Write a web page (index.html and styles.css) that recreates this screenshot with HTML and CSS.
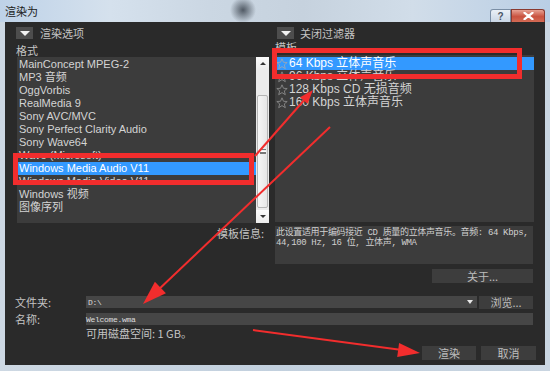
FILE: index.html
```html
<!DOCTYPE html>
<html lang="zh-CN">
<head>
<meta charset="utf-8">
<title>渲染为</title>
<link rel="stylesheet" href="styles.css">
</head>
<body>
<div class="window">
  <div class="titlebar">
    <span class="title">渲染为</span>
    <div class="caption">
      <div class="cap-btn help">?</div>
      <div class="cap-btn close"><svg width="11" height="8" viewBox="0 0 11 8"><path d="M1.5 0.8 L9.5 7.2 M9.5 0.8 L1.5 7.2" stroke="#fff" stroke-width="2.2" stroke-linecap="round"/></svg></div>
    </div>
  </div>
  <div class="client">
    <div class="panes">
      <div class="pane pane-left">
        <div class="pane-head"><span class="dd"></span><span class="pane-title">渲染选项</span></div>
        <div class="field-label fl-left">格式</div>
        <div class="listbox">
          <ul class="list list-left">
            <li>MainConcept MPEG-2</li>
            <li>MP3 音频</li>
            <li>OggVorbis</li>
            <li>RealMedia 9</li>
            <li>Sony AVC/MVC</li>
            <li>Sony Perfect Clarity Audio</li>
            <li>Sony Wave64</li>
            <li>Wave (Microsoft)</li>
            <li class="sel">Windows Media Audio V11</li>
            <li>Windows Media Video V11</li>
            <li>Windows 视频</li>
            <li>图像序列</li>
          </ul>
          <div class="vscroll">
            <div class="sb-btn up"><span class="tri-up"></span></div>
            <div class="sb-track"></div>
            <div class="sb-thumb"><span class="grip"></span></div>
            <div class="sb-track2"></div>
            <div class="sb-btn down"><span class="tri-down"></span></div>
          </div>
        </div>
      </div>
      <div class="pane pane-right">
        <div class="pane-head head-right"><span class="dd"></span><span class="pane-title">关闭过滤器</span></div>
        <div class="field-label fl-right">模板</div>
        <ul class="list list-right">
          <li class="sel"><svg class="star" viewBox="0 0 12 12"><path d="M6 0.8 L7.5 4.3 L11.2 4.5 L8.3 6.9 L9.3 10.7 L6 8.6 L2.7 10.7 L3.7 6.9 L0.8 4.5 L4.5 4.3 Z" fill="none" stroke="#9aa7b6" stroke-width="0.9"/></svg><span>64 Kbps 立体声音乐</span></li>
          <li><svg class="star" viewBox="0 0 12 12"><path d="M6 0.8 L7.5 4.3 L11.2 4.5 L8.3 6.9 L9.3 10.7 L6 8.6 L2.7 10.7 L3.7 6.9 L0.8 4.5 L4.5 4.3 Z" fill="none" stroke="#8a8a8a" stroke-width="0.9"/></svg><span>96 Kbps 立体声音乐</span></li>
          <li><svg class="star" viewBox="0 0 12 12"><path d="M6 0.8 L7.5 4.3 L11.2 4.5 L8.3 6.9 L9.3 10.7 L6 8.6 L2.7 10.7 L3.7 6.9 L0.8 4.5 L4.5 4.3 Z" fill="none" stroke="#8a8a8a" stroke-width="0.9"/></svg><span>128 Kbps CD 无损音频</span></li>
          <li><svg class="star" viewBox="0 0 12 12"><path d="M6 0.8 L7.5 4.3 L11.2 4.5 L8.3 6.9 L9.3 10.7 L6 8.6 L2.7 10.7 L3.7 6.9 L0.8 4.5 L4.5 4.3 Z" fill="none" stroke="#8a8a8a" stroke-width="0.9"/></svg><span>160 Kbps 立体声音乐</span></li>
        </ul>
      </div>
    </div>
    <div class="info-row">
      <span class="info-label">模板信息:</span>
      <div class="info-box">此设置适用于编码接近 CD 质量的立体声音乐。音频: 64 Kbps,<br>44,100 Hz, 16 位, 立体声, WMA</div>
    </div>
    <div class="about-row"><button class="btn btn-about">关于...</button></div>
    <div class="form-row row-folder">
      <span class="form-label">文件夹:</span>
      <div class="input input-folder"><span class="mono">D:\</span><span class="tri-down white"></span></div>
      <button class="btn btn-browse">浏览...</button>
    </div>
    <div class="form-row row-name">
      <span class="form-label">名称:</span>
      <div class="input input-name"><span class="mono">Welcome.wma</span></div>
    </div>
    <div class="disk">可用磁盘空间: 1 GB。</div>
    <div class="actions">
      <button class="btn btn-render">渲染</button>
      <button class="btn btn-cancel">取消</button>
    </div>
  </div>
  <svg class="annot" width="550" height="371" viewBox="0 0 550 371">
    <g fill="none" stroke="#f22d2d" stroke-width="5">
      <rect x="15.5" y="155.5" width="236" height="27"/>
      <rect x="274.5" y="50.5" width="245" height="26"/>
    </g>
    <g stroke="#f22d2d" stroke-width="2" fill="none">
      <line x1="255" y1="156" x2="306" y2="98"/>
      <line x1="330" y1="127" x2="156" y2="292"/>
      <line x1="253" y1="330" x2="402" y2="350"/>
    </g>
    <g fill="#f22d2d">
      <polygon points="313,90 307.5,103.8 300,97.2"/>
      <polygon points="143,304 165.9,293.3 154.9,281.7"/>
      <polygon points="420,353 397.2,356.9 399.1,343.1"/>
    </g>
  </svg>
</div>
</body>
</html>
```
FILE: styles.css
```css
* { box-sizing: border-box; }
html, body { margin: 0; padding: 0; }
body {
  width: 550px;
  height: 371px;
  overflow: hidden;
  font-family: "Liberation Sans", "Noto Sans CJK SC", sans-serif;
  font-size: 11px;
  background: #c6d4e2;
}
.window {
  position: relative;
  width: 550px;
  height: 371px;
  display: flex;
  flex-direction: column;
  background: linear-gradient(to right, #cdd8e3, #c2d0de 50%, #c9d5e1);
}
.titlebar {
  height: 22px;
  display: flex;
  justify-content: space-between;
  background:
    radial-gradient(circle at 243px 10px, rgba(40,48,58,0.75) 0, rgba(40,48,58,0) 13px),
    linear-gradient(to right, #bed2e8 0, #d5e1ed 20%, #cbd7e3 38%, #c6d2de 55%, #d1dde9 75%, #b9cee5 100%);
}
.title {
  margin-left: 5px;
  line-height: 22px;
  color: #1b1b1b;
  font-size: 11px;
  font-family: "Noto Sans CJK SC", sans-serif;
}
.caption {
  display: flex;
  align-self: flex-end;
  margin-right: 5px;
  height: 13px;
}
.cap-btn {
  height: 13px;
  display: flex;
  align-items: center;
  justify-content: center;
}
.help {
  width: 21px;
  border: 1px solid #7a8ea5;
  border-bottom: none;
  border-top-left-radius: 3px;
  background: linear-gradient(#eaf0f6, #c9d6e4);
  color: #4a5666;
  font-size: 10px;
  font-weight: bold;
}
.close {
  width: 34px;
  border: 1px solid #8a3a30;
  border-bottom: none;
  border-top-right-radius: 3px;
  background: linear-gradient(#e7a294, #c9523f 55%, #d46b55);
}
.client {
  margin: 0 5px 6px 5px;
  height: 343px;
  background: #2a2a2a;
  display: flex;
  flex-direction: column;
  color: #c8c8c8;
}
.panes {
  display: flex;
  height: 201px;
}
.pane-left {
  width: 265px;
  padding-left: 11px;
}
.pane-right {
  width: 264px;
  padding-left: 5px;
}
.pane-head {
  display: flex;
  align-items: center;
  height: 12px;
  margin-top: 5px;
}
.head-right { margin-left: 2px; }
.dd {
  width: 17px;
  height: 12px;
  background: #4d4d4d;
  display: flex;
  align-items: center;
  justify-content: center;
}
.dd::after {
  content: "";
  border-left: 5px solid transparent;
  border-right: 5px solid transparent;
  border-top: 5px solid #f2f2f2;
}
.pane-title {
  margin-left: 7px;
  font-family: "Noto Sans CJK SC", sans-serif;
  font-size: 11px;
  line-height: 12px;
  color: #c4c4c4;
}
.head-right .pane-title { margin-left: 6px; }
.field-label {
  font-family: "Noto Sans CJK SC", sans-serif;
  font-size: 11px;
  color: #c4c4c4;
}
.fl-left {
  height: 18px;
  padding-top: 5px;
  line-height: 13px;
}
.fl-right {
  height: 16px;
  line-height: 16px;
}
.listbox {
  display: flex;
  margin-left: 1px;
  height: 166px;
}
.list {
  list-style: none;
  margin: 0;
  padding: 0;
  background: #3c3c3c;
}
.list li {
  height: 13px;
  line-height: 13px;
  white-space: nowrap;
  color: #d4d4d4;
}
.list li.sel {
  background: #3399ff;
  color: #ffffff;
}
.list-left {
  width: 239px;
  padding-top: 1px;
}
.list-left li { padding-left: 2px; }
.list-right {
  width: 259px;
  height: 167px;
  padding-top: 2px;
}
.list-right li {
  display: flex;
  align-items: center;
  font-size: 12px;
  padding-left: 1px;
}
.star {
  width: 12px;
  height: 12px;
  margin-right: 1px;
  flex: none;
}
.vscroll {
  width: 13px;
  display: flex;
  flex-direction: column;
  background: #e9e9e9;
}
.sb-btn {
  height: 13px;
  background: linear-gradient(#fbfbfb, #ececec);
  display: flex;
  align-items: center;
  justify-content: center;
}
.tri-up {
  border-left: 3px solid transparent;
  border-right: 3px solid transparent;
  border-bottom: 3px solid #333;
}
.tri-down {
  border-left: 3px solid transparent;
  border-right: 3px solid transparent;
  border-top: 3px solid #333;
}
.sb-track { height: 25px; background: #ebebeb; }
.sb-thumb {
  height: 113px;
  margin: 0 1px;
  border: 1px solid #b5b5b5;
  border-radius: 2px;
  background: linear-gradient(to right, #f6f6f6, #e6e6e6);
  display: flex;
  align-items: center;
  justify-content: center;
}
.grip {
  width: 6px;
  height: 5px;
  border-top: 1px solid #777;
  border-bottom: 1px solid #777;
  background: linear-gradient(#fff 0, #fff 1px, #777 1px, #777 2px, transparent 2px);
  background-size: 6px 2px;
  background-position: 0 1px;
  background-repeat: no-repeat;
}
.sb-track2 { flex: 1; background: #ebebeb; }
.info-row {
  display: flex;
  margin-top: 3px;
  height: 38px;
}
.info-label {
  width: 259px;
  text-align: right;
  font-family: "Noto Sans CJK SC", sans-serif;
  line-height: 12px;
  padding-top: 1px;
  color: #c4c4c4;
}
.info-box {
  margin-left: 11px;
  width: 258px;
  background: #3c3c3c;
  font-family: "Liberation Mono", "Noto Sans CJK SC", monospace;
  font-size: 9px;
  line-height: 10px;
  padding: 2px 0 0 1px;
  color: #d0d0d0;
  white-space: nowrap;
  letter-spacing: -0.35px;
}
.about-row {
  display: flex;
  justify-content: flex-end;
  padding-right: 12px;
  margin-top: 5px;
  height: 14px;
}
.btn {
  border: none;
  margin: 0;
  padding: 0;
  background: #3d3d3d;
  color: #bdbdbd;
  font-family: "Noto Sans CJK SC", sans-serif;
  font-size: 11px;
  height: 14px;
  line-height: 14px;
}
.btn-about { width: 101px; }
.form-row {
  display: flex;
  align-items: center;
  height: 12px;
  padding-right: 12px;
}
.row-folder { margin-top: 13px; }
.row-name { margin-top: 5px; }
.form-label {
  width: 81px;
  padding-left: 10px;
  font-family: "Noto Sans CJK SC", sans-serif;
  color: #c4c4c4;
  line-height: 12px;
}
.input {
  height: 12px;
  background: #464646;
  display: flex;
  align-items: center;
  padding-left: 2px;
}
.input-folder {
  width: 391px;
  justify-content: space-between;
  padding-right: 4px;
}
.input-name { flex: 1; padding-left: 0; }
.mono {
  font-family: "Liberation Mono", monospace;
  font-size: 8px;
  color: #dcdcdc;
  letter-spacing: -0.3px;
}
.tri-down.white { border-top-color: #e8e8e8; border-top-width: 4px; }
.btn-browse {
  margin-left: 2px;
  width: 54px;
  height: 13px;
  line-height: 13px;
}
.disk {
  margin-top: 3px;
  padding-left: 81px;
  height: 10px;
  line-height: 10px;
  font-family: "Noto Sans CJK SC", sans-serif;
  color: #c4c4c4;
}
.actions {
  display: flex;
  justify-content: flex-end;
  margin-top: 8px;
  padding-right: 9px;
  gap: 5px;
}
.btn-render { width: 54px; }
.btn-cancel { width: 55px; }
.annot {
  position: absolute;
  left: 0;
  top: 0;
  pointer-events: none;
}
```
